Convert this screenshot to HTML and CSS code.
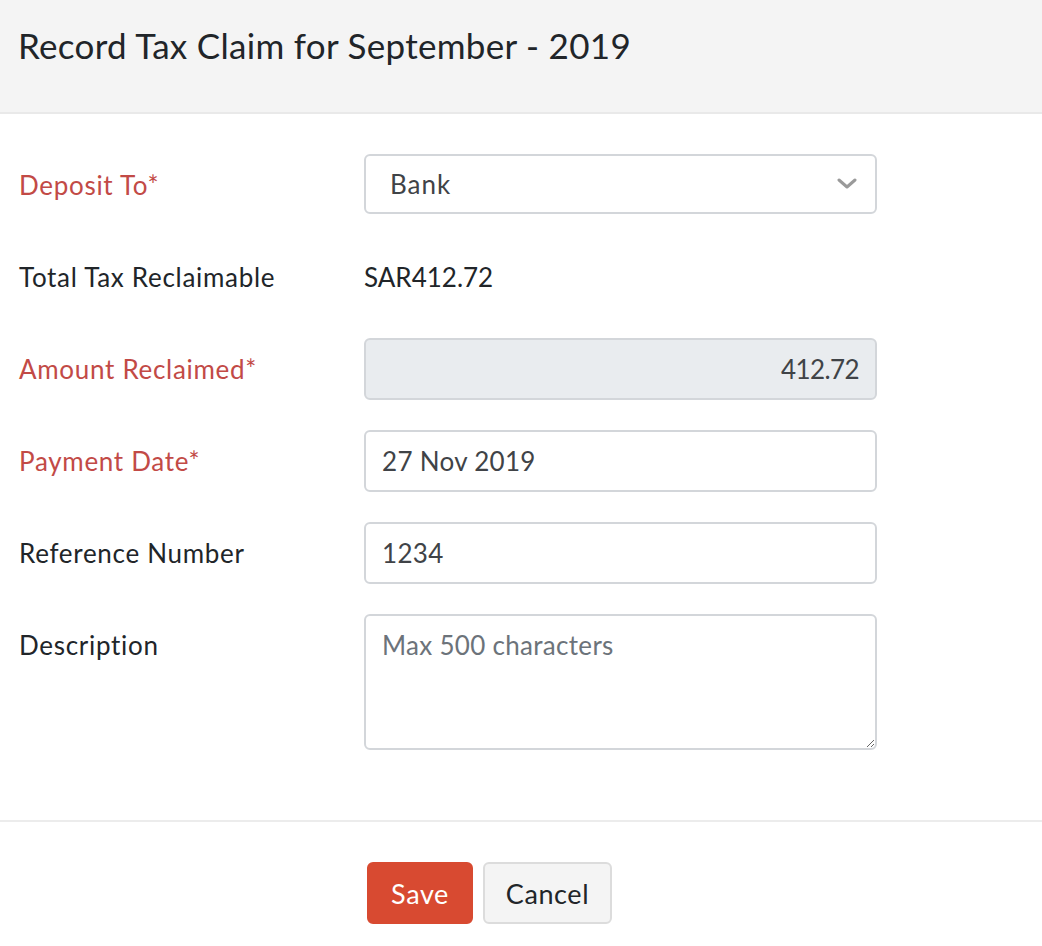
FILE: index.html
```html
<!DOCTYPE html>
<html lang="en">
<head>
<meta charset="utf-8">
<title>Record Tax Claim</title>
<link rel="stylesheet" href="styles.css">
</head>
<body>
<div class="modal">
  <header class="modal-header">
    <h1 class="modal-title">Record Tax Claim for September - 2019</h1>
  </header>
  <form class="modal-body">
    <div class="row">
      <label class="label required">Deposit To*</label>
      <div class="field select">
        <span class="select-value">Bank</span>
        <svg class="chevron" width="20" height="12" viewBox="0 0 20 12"><path d="M2 2 L10 9 L18 2" fill="none" stroke="#9a9a9a" stroke-width="3" stroke-linecap="round" stroke-linejoin="round"/></svg>
      </div>
    </div>
    <div class="row">
      <label class="label">Total Tax Reclaimable</label>
      <div class="value">SAR412.72</div>
    </div>
    <div class="row">
      <label class="label required">Amount Reclaimed*</label>
      <div class="field input disabled amount">412.72</div>
    </div>
    <div class="row">
      <label class="label required">Payment Date*</label>
      <div class="field input">27 Nov 2019</div>
    </div>
    <div class="row">
      <label class="label">Reference Number</label>
      <div class="field input">1234</div>
    </div>
    <div class="row">
      <label class="label">Description</label>
      <textarea class="field textarea" placeholder="Max 500 characters"></textarea>
    </div>
  </form>
  <footer class="modal-footer">
    <button class="btn btn-primary" type="button">Save</button>
    <button class="btn btn-secondary" type="button">Cancel</button>
  </footer>
</div>
</body>
</html>
```

FILE: styles.css
```css
* { box-sizing: border-box; }
html, body { margin: 0; padding: 0; background: #fff; }
body {
  font-family: Lato, "Open Sans", "Liberation Sans", sans-serif;
  color: #212529;
}
.modal { width: 1042px; }
.modal-header {
  height: 114px;
  background: #f4f4f4;
  border-bottom: 2px solid #e9e9e9;
  display: flex;
  align-items: center;
  padding: 0 18px 22px;
}
.modal-title {
  margin: 0;
  font-size: 35px;
  font-weight: 400;
  color: #212529;
  letter-spacing: 0.3px;
}
.modal-body {
  display: flex;
  flex-direction: column;
  gap: 30px;
  padding: 40px 0 70px;
  border-bottom: 2px solid #ececec;
}
.row {
  display: flex;
  align-items: flex-start;
}
.label {
  width: 364px;
  padding-left: 19px;
  line-height: 62px;
  font-size: 26px;
  letter-spacing: 0.7px;
  color: #212529;
}
.label.required { color: #c24a46; }
.value {
  line-height: 62px;
  font-size: 26px;
  letter-spacing: 0;
  color: #212529;
}
.field {
  width: 513px;
  height: 62px;
  border: 2px solid #d3d6da;
  border-radius: 6px;
  background: #fff;
  font-family: inherit;
  font-size: 26px;
  letter-spacing: 0.3px;
  color: #404347;
  display: flex;
  align-items: center;
  padding: 0 16px;
}
.select { padding-left: 24px; justify-content: space-between; height: 60px; letter-spacing: 1px; }
.chevron { margin-right: 2px; }
.input.disabled { background: #e9ecef; }
.amount { justify-content: flex-end; letter-spacing: -0.6px; }
.textarea {
  height: 136px;
  padding: 10px 16px;
  resize: vertical;
  line-height: 38px;
  display: block;
  outline: none;
}
.textarea::placeholder { color: #6c737a; opacity: 1; }
.modal-footer {
  display: flex;
  gap: 10px;
  padding: 40px 0 0 367px;
}
.btn {
  height: 62px;
  border-radius: 6px;
  font-family: inherit;
  font-size: 27px;
  letter-spacing: 0.6px;
  padding: 0;
  cursor: pointer;
}
.btn-primary {
  background: #d84a31;
  border: 2px solid #d84a31;
  color: #fff;
  width: 106px;
}
.btn-secondary {
  background: #f4f4f4;
  border: 2px solid #dcdcdc;
  color: #212529;
  width: 129px;
}
```
